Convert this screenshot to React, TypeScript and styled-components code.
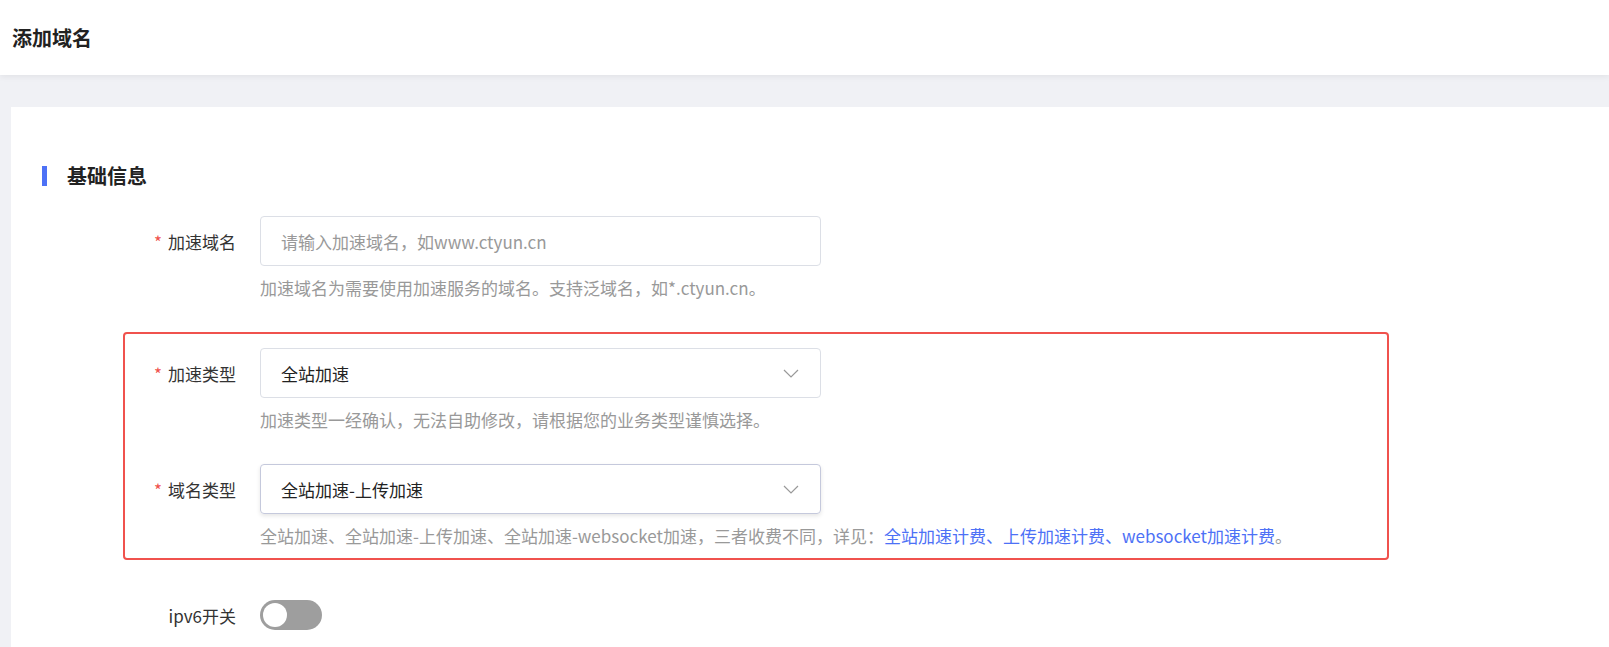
import { createGlobalStyle } from "styled-components";
import styled from "styled-components";

const GlobalStyle = createGlobalStyle`
  body {
    margin: 0;
    background: #f0f1f5;
    font-family: "Noto Sans CJK SC", "Liberation Sans", sans-serif;
    color: #333;
  }
`;

const Header = styled.div`
  height: 75px;
  box-sizing: border-box;
  background: #fff;
  box-shadow: 0 2px 6px rgba(0, 0, 0, 0.06);
  display: flex;
  align-items: center;
  padding-left: 12px;
  font-size: 20px;
  font-weight: 700;
  color: #222;
`;

const Body = styled.div`
  padding: 32px 0 0 11px;
`;

const Card = styled.div`
  background: #fff;
  padding: 54px 0 20px 31px;
  min-height: 480px;
`;

const SectionTitle = styled.div`
  display: flex;
  align-items: center;
  gap: 20px;
  font-size: 20px;
  font-weight: 700;
  color: #222;
  margin-bottom: 26px;
  &::before {
    content: "";
    width: 5px;
    height: 20px;
    background: #4d71f6;
  }
`;

const Highlight = styled.div`
  border: 2px solid #f0524d;
  border-radius: 4px;
  width: 1266px;
  margin-left: 81px;
  padding: 14px 0 10px;
  box-sizing: border-box;
  margin-bottom: 30px;
`;

const Row = styled.div<{ $inset?: number; $last?: boolean }>`
  display: grid;
  grid-template-columns: ${(p) => 194 - (p.$inset ?? 0)}px 561px;
  column-gap: 24px;
  margin-bottom: ${(p) => (p.$last ? 0 : 32)}px;
`;

const Label = styled.div`
  height: 50px;
  display: flex;
  align-items: center;
  justify-content: flex-end;
  font-size: 17px;
  color: #333;
  white-space: nowrap;
`;

const Star = styled.span`
  color: #f0524d;
  margin-right: 6px;
`;

const Field = styled.div<{ $focus?: boolean; $placeholder?: boolean }>`
  height: 50px;
  box-sizing: border-box;
  border: 1px solid ${(p) => (p.$focus ? "#c5c9dc" : "#dcdfe6")};
  border-radius: 4px;
  display: flex;
  align-items: center;
  justify-content: space-between;
  padding: 0 20px;
  font-size: 17px;
  color: ${(p) => (p.$placeholder ? "#999" : "#222")};
  box-shadow: ${(p) => (p.$focus ? "0 2px 4px rgba(0,0,0,0.1)" : "none")};
`;

const Help = styled.div`
  grid-column: 2;
  margin-top: 10px;
  font-size: 17px;
  line-height: 24px;
  color: #999;
  white-space: nowrap;
`;

const Link = styled.span`
  color: #4d71f6;
`;

const Toggle = styled.div`
  width: 62px;
  height: 30px;
  border-radius: 15px;
  background: #9e9e9e;
  display: flex;
  align-items: center;
  padding-left: 3px;
  box-sizing: border-box;
  &::before {
    content: "";
    width: 24px;
    height: 24px;
    border-radius: 50%;
    background: #fff;
  }
`;

const Chevron = () => (
  <svg width="18" height="18" viewBox="0 0 18 18" fill="none" stroke="#999" strokeWidth="1.2">
    <path d="M2 6l7 7 7-7" />
  </svg>
);

export default function App() {
  return (
    <>
      <GlobalStyle />
      <Header>添加域名</Header>
      <Body>
        <Card>
          <SectionTitle>基础信息</SectionTitle>
          <Row>
            <Label><Star>*</Star>加速域名</Label>
            <Field $placeholder>请输入加速域名，如www.ctyun.cn</Field>
            <Help>加速域名为需要使用加速服务的域名。支持泛域名，如*.ctyun.cn。</Help>
          </Row>
          <Highlight>
            <Row $inset={83}>
              <Label><Star>*</Star>加速类型</Label>
              <Field>全站加速<Chevron /></Field>
              <Help>加速类型一经确认，无法自助修改，请根据您的业务类型谨慎选择。</Help>
            </Row>
            <Row $inset={83} $last>
              <Label><Star>*</Star>域名类型</Label>
              <Field $focus>全站加速-上传加速<Chevron /></Field>
              <Help>
                全站加速、全站加速-上传加速、全站加速-websocket加速，三者收费不同，详见：
                <Link>全站加速计费、上传加速计费、websocket加速计费</Link>。
              </Help>
            </Row>
          </Highlight>
          <Row>
            <Label>ipv6开关</Label>
            <Label style={{ justifyContent: "flex-start" }}><Toggle /></Label>
          </Row>
        </Card>
      </Body>
    </>
  );
}
